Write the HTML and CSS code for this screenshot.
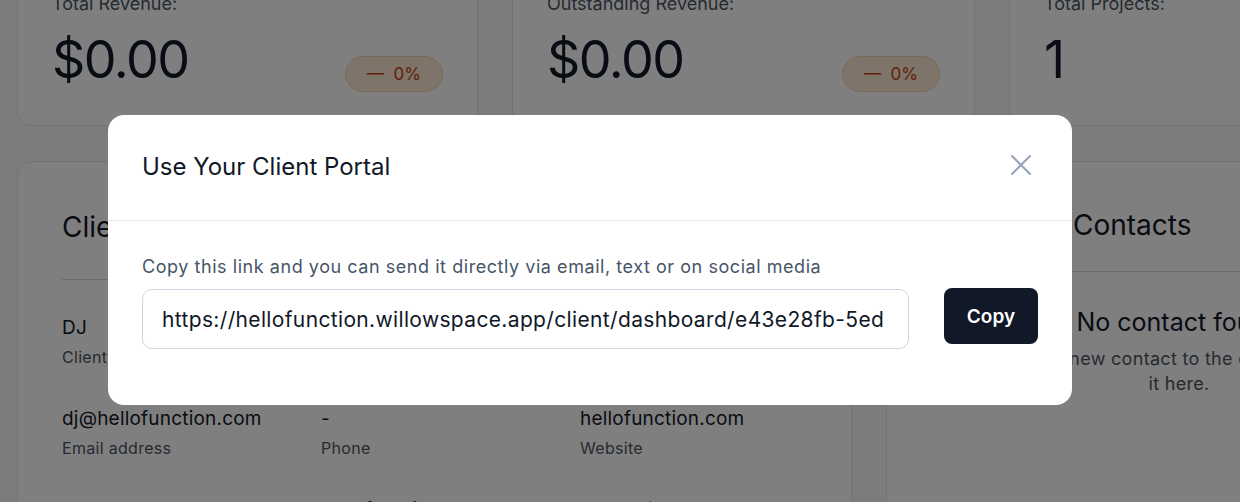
FILE: index.html
```html
<!DOCTYPE html>
<html>

<head>
    <title>Client Dashboard</title>
    <link rel="stylesheet" href="styles.css">
</head>

<body>
    <div class="page">
        <div class="stats">
            <div class="stat-card">
                <div class="stat-label">Total Revenue:</div>
                <div class="stat-row">
                    <div class="stat-value">$0.00</div>
                    <span class="badge">&mdash;&nbsp; 0%</span>
                </div>
            </div>
            <div class="stat-card">
                <div class="stat-label">Outstanding Revenue:</div>
                <div class="stat-row">
                    <div class="stat-value">$0.00</div>
                    <span class="badge">&mdash;&nbsp; 0%</span>
                </div>
            </div>
            <div class="stat-card">
                <div class="stat-label">Total Projects:</div>
                <div class="stat-row">
                    <div class="stat-value">1</div>
                </div>
            </div>
        </div>

        <div class="details">
            <div class="card client-card">
                <h2 class="card-title">Client Details</h2>
                <div class="info-grid">
                    <div class="info">
                        <div class="info-value">DJ</div>
                        <div class="info-label">Client</div>
                    </div>
                    <div class="info"></div>
                    <div class="info"></div>

                    <div class="info">
                        <div class="info-value">dj@hellofunction.com</div>
                        <div class="info-label">Email address</div>
                    </div>
                    <div class="info">
                        <div class="info-value">-</div>
                        <div class="info-label">Phone</div>
                    </div>
                    <div class="info">
                        <div class="info-value">hellofunction.com</div>
                        <div class="info-label">Website</div>
                    </div>

                    <div class="info">
                        <div class="info-value">Company</div>
                        <div class="info-label">Type</div>
                    </div>
                    <div class="info">
                        <div class="info-value">hellofunction LLC</div>
                        <div class="info-label">Business name</div>
                    </div>
                    <div class="info">
                        <div class="info-value">Europe/London</div>
                        <div class="info-label">Timezone</div>
                    </div>
                </div>
            </div>

            <div class="card contacts-card">
                <h2 class="contacts-title">Contacts</h2>
                <div class="empty">
                    <div class="empty-title">No contact found</div>
                    <p class="empty-text">Add a new contact to the client to see<br>it here.</p>
                </div>
            </div>
        </div>
    </div>

    <div class="overlay">
        <div class="modal">
            <div class="modal-header">
                <h3>Use Your Client Portal</h3>
                <button class="close-button" aria-label="Close">
                    <svg width="22" height="22" viewBox="0 0 22 22">
                        <path d="M2 2 L20 20 M20 2 L2 20" stroke="#94a3b8" stroke-width="2" stroke-linecap="round" />
                    </svg>
                </button>
            </div>
            <div class="modal-body">
                <p>Copy this link and you can send it directly via email, text or on social media</p>
                <div class="link-row">
                    <input type="text" class="link-input" readonly
                        value="https://hellofunction.willowspace.app/client/dashboard/e43e28fb-5ed">
                    <button class="copy-button">Copy</button>
                </div>
            </div>
        </div>
    </div>
</body>

</html>
```

FILE: styles.css
```css
body {
    margin: 0;
    background-color: #f8f9fa;
    font-family: "Inter", "Noto Sans", sans-serif;
    color: #111827;
    overflow: hidden;
    height: 502px;
}

.page {
    width: 1700px;
    padding: 0 17px;
    margin-top: -36px;
}

.stats {
    display: grid;
    grid-template-columns: 461px 463px 463px;
    gap: 34px;
}

.stat-card {
    background-color: white;
    border: 1px solid #e5e7eb;
    border-radius: 14px;
    padding: 28px 34px 33px;
}

.stat-label {
    font-size: 18px;
    color: #4b5563;
    line-height: 22px;
}

.stat-row {
    display: flex;
    justify-content: space-between;
    align-items: flex-end;
    margin-top: 15px;
}

.stat-value {
    font-size: 52px;
    line-height: 60px;
    letter-spacing: -1.5px;
    font-weight: 400;
    margin-bottom: 2px;
}

.badge {
    display: inline-block;
    height: 34px;
    line-height: 34px;
    padding: 0 21px;
    border-radius: 18px;
    background-color: #fde8d4;
    border: 1px solid #f8cfa9;
    color: #c2410c;
    font-size: 17px;
}

.details {
    display: grid;
    grid-template-columns: 835px 586px;
    gap: 34px;
    margin-top: 35px;
}

.card {
    background-color: white;
    border: 1px solid #e5e7eb;
    border-radius: 14px;
}

.client-card {
    padding: 0 44px;
}

.card-title {
    font-size: 28px;
    font-weight: 400;
    margin: 0;
    padding: 48px 0 35px;
    line-height: 34px;
    border-bottom: 1px solid #d1d5db;
}

.info-grid {
    display: grid;
    grid-template-columns: 259px 259px 259px;
    row-gap: 40px;
    padding-top: 36px;
}

.info-value {
    font-size: 19px;
    line-height: 24px;
    letter-spacing: 0.2px;
    color: #111827;
}

.info-label {
    font-size: 16px;
    line-height: 20px;
    letter-spacing: 0.3px;
    margin-top: 7px;
    color: #4b5563;
}

.contacts-title {
    font-size: 28px;
    font-weight: 400;
    margin: 0;
    padding: 46px 0 29px 186px;
    line-height: 34px;
    border-bottom: 1px solid #d1d5db;
}

.empty {
    text-align: center;
    padding: 35px 20px;
}

.empty-title {
    font-size: 25px;
    line-height: 30px;
}

.empty-text {
    font-size: 18px;
    line-height: 25px;
    letter-spacing: 0.3px;
    color: #4b5563;
    margin: 9px 0 0;
}

.overlay {
    position: fixed;
    inset: 0;
    background-color: rgba(0, 0, 0, 0.5);
}

.modal {
    position: absolute;
    left: 108px;
    top: 115px;
    width: 964px;
    background-color: white;
    border-radius: 16px;
}

.modal-header {
    display: flex;
    justify-content: space-between;
    align-items: center;
    height: 106px;
    padding: 0 40px 3px 34px;
    box-sizing: border-box;
    border-bottom: 1px solid #e5e7eb;
}

.modal-header h3 {
    margin: 0;
    font-size: 24px;
    font-weight: 400;
    color: #111827;
}

.close-button {
    background: none;
    border: none;
    padding: 0;
    width: 22px;
    height: 22px;
    margin-bottom: 2px;
    cursor: pointer;
}

.modal-body {
    padding: 34px 34px 56px;
}

.modal-body p {
    margin: 0 0 10px;
    font-size: 18px;
    line-height: 24px;
    letter-spacing: 0.55px;
    color: #475569;
}

.link-row {
    display: flex;
    align-items: flex-start;
    gap: 35px;
}

.link-input {
    flex: 1;
    height: 60px;
    padding: 0 19px;
    border: 1px solid #cbd5e1;
    border-radius: 10px;
    font-family: inherit;
    font-size: 21px;
    letter-spacing: 0.35px;
    color: #111827;
    box-sizing: border-box;
    outline: none;
}

.copy-button {
    width: 94px;
    height: 56px;
    margin-top: -1px;
    background-color: #111827;
    color: white;
    border: none;
    border-radius: 8px;
    font-family: inherit;
    font-size: 19px;
    font-weight: 600;
    cursor: pointer;
}
```
